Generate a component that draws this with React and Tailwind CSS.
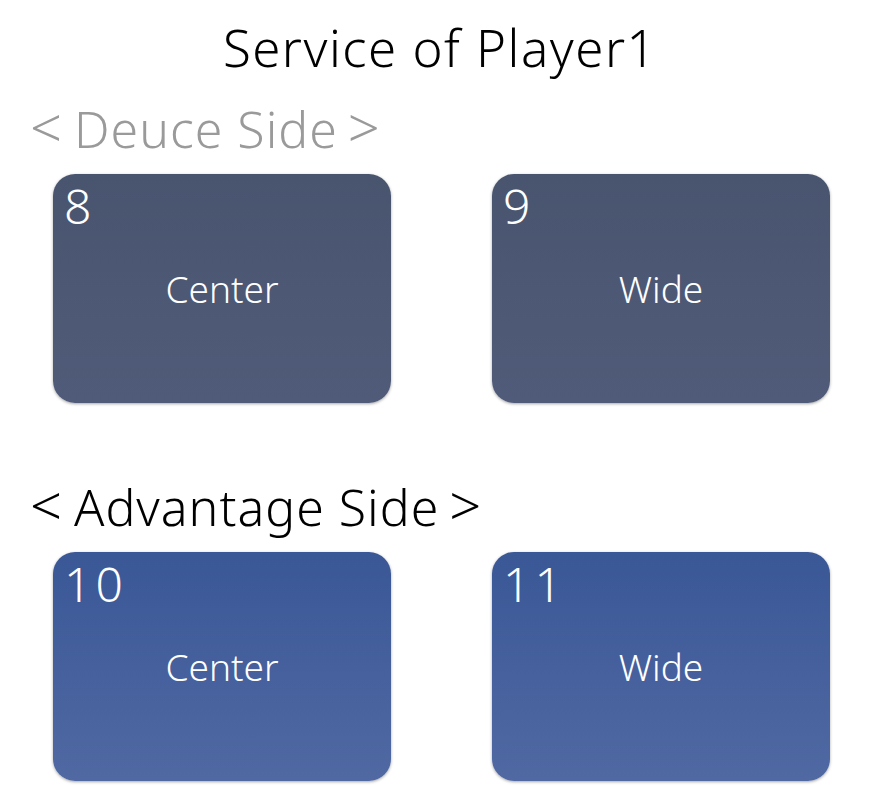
const font = {
  fontFamily: '"Noto Sans", "Noto Sans CJK JP", sans-serif',
};

const sides = [
  {
    label: "Deuce Side",
    labelClass: "text-[#9a9a9a]",
    cardClass: "bg-gradient-to-b from-[#49556f] to-[#505b79]",
    zones: [
      { no: 8, name: "Center" },
      { no: 9, name: "Wide" },
    ],
  },
  {
    label: "Advantage Side",
    labelClass: "text-black",
    cardClass: "bg-gradient-to-b from-[#3a5796] to-[#5069a3]",
    zones: [
      { no: 10, name: "Center" },
      { no: 11, name: "Wide" },
    ],
  },
];

function ZoneCard({ no, name, cardClass }) {
  return (
    <div
      className={`relative h-[229px] rounded-[22px] shadow-[0_1px_3px_rgba(0,0,0,0.35)] ${cardClass}`}
    >
      <div className="absolute left-[11px] top-[8px] text-[48px] font-light leading-none tracking-[4px] text-white">
        {no}
      </div>
      <div className="flex h-full items-center justify-center text-[37px] font-light text-white">
        {name}
      </div>
    </div>
  );
}

export default function App() {
  return (
    <div className="h-[806px] w-[880px] bg-white" style={font}>
      <h1 className="pt-[17px] text-center text-[51px] font-light leading-[60px] tracking-[1.5px] text-black">
        Service of Player1
      </h1>
      {sides.map((side, i) => (
        <div key={side.label} className={i === 0 ? "mt-[21px]" : "mt-[73px]"}>
          <div
            className={`pl-[30px] text-[50px] font-light leading-[60px] tracking-[1px] ${side.labelClass}`}
          >
            <span className="mr-[11px] text-[56px] leading-none">&lt;</span>
            {side.label}
            <span className="ml-[10px] text-[56px] leading-none">&gt;</span>
          </div>
          <div className="mt-[15px] grid grid-cols-2 gap-[101px] pl-[53px] pr-[50px]">
            {side.zones.map((z) => (
              <ZoneCard key={z.no} {...z} cardClass={side.cardClass} />
            ))}
          </div>
        </div>
      ))}
    </div>
  );
}
